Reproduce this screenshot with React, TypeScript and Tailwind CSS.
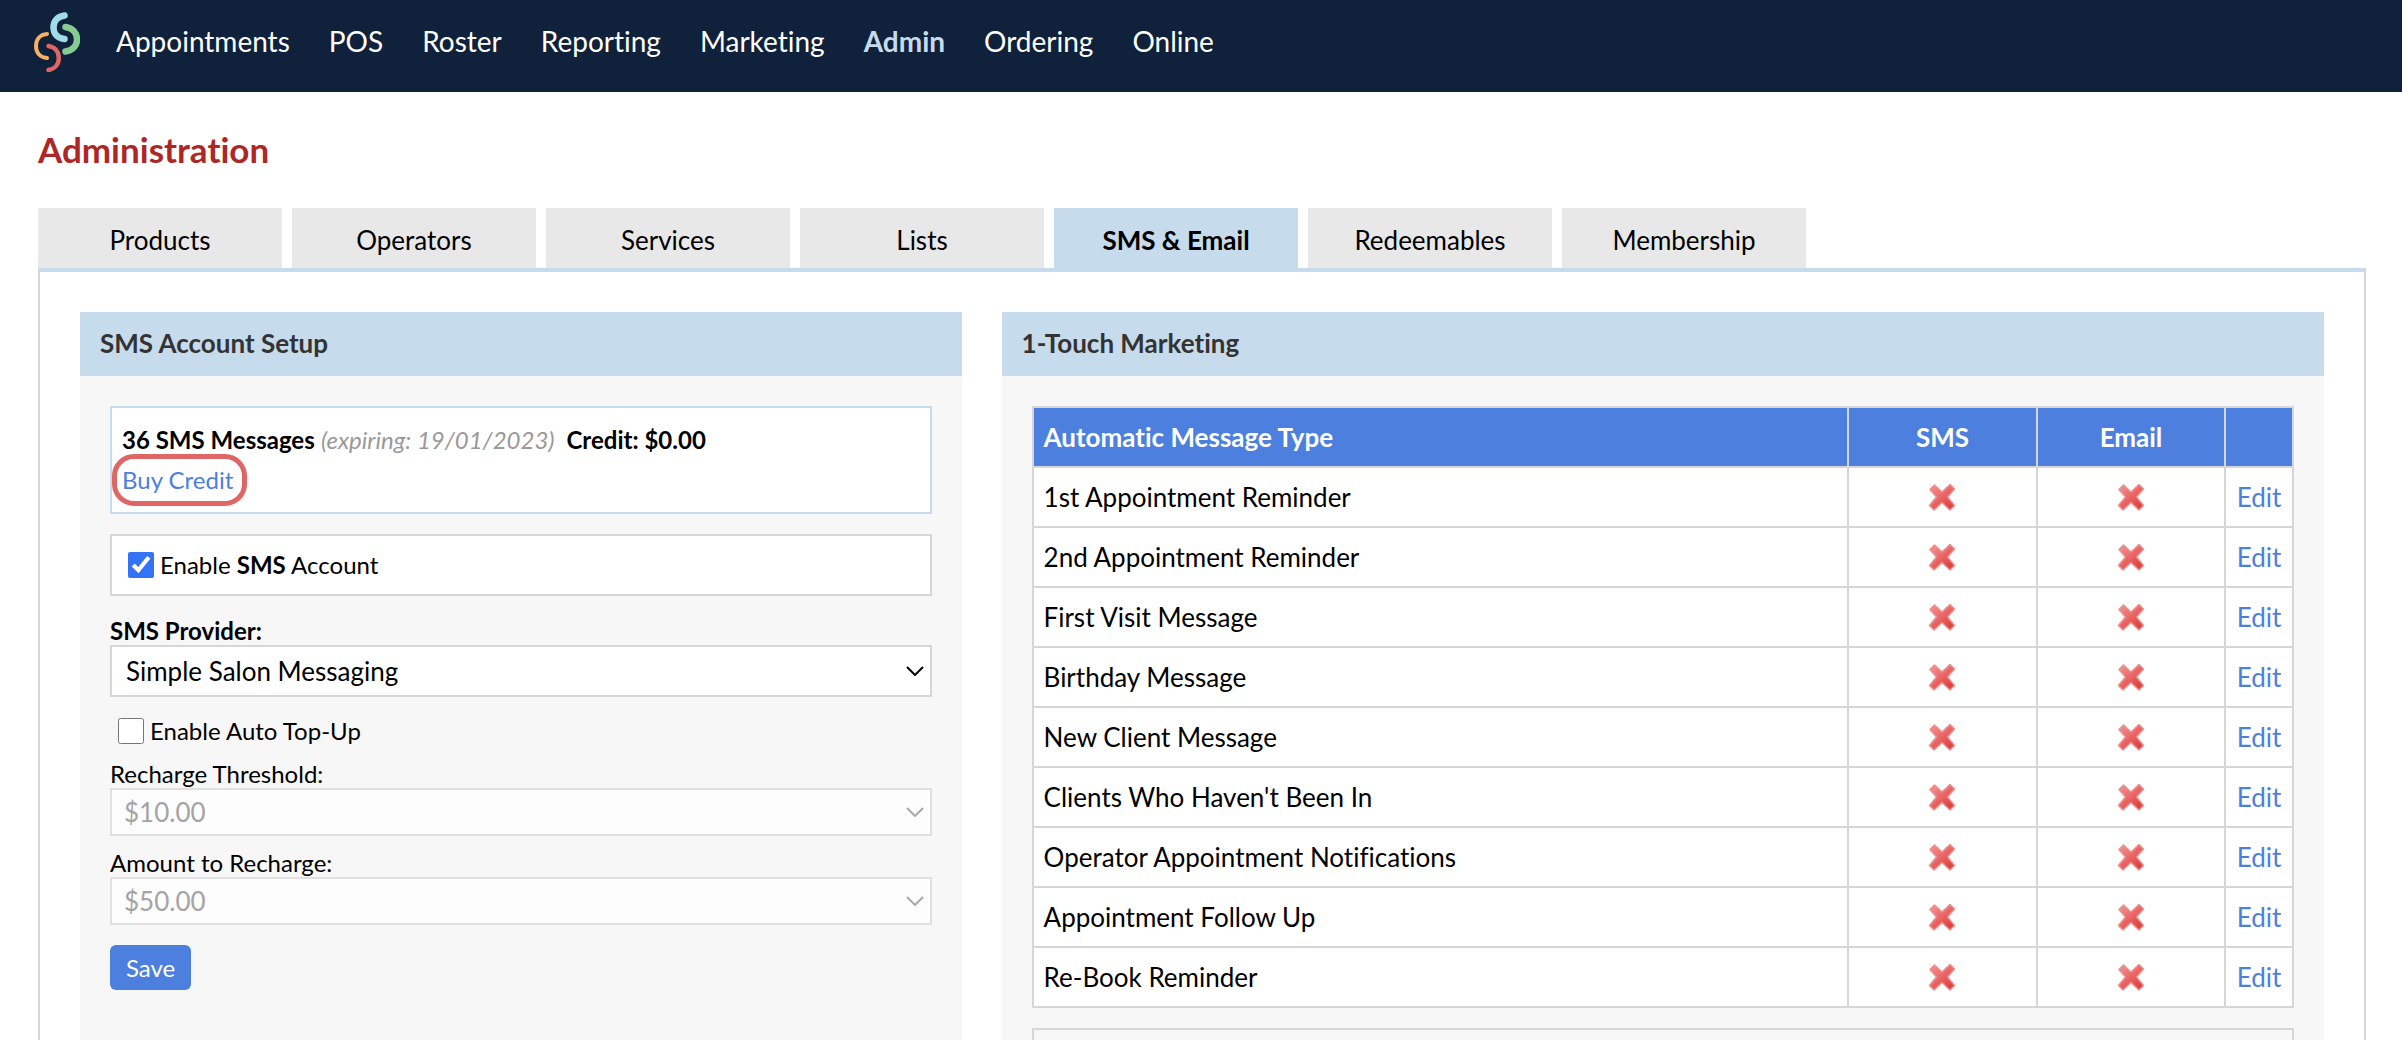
import React from 'react';

const navItems = [
  'Appointments',
  'POS',
  'Roster',
  'Reporting',
  'Marketing',
  'Admin',
  'Ordering',
  'Online',
];

const tabs = [
  'Products',
  'Operators',
  'Services',
  'Lists',
  'SMS & Email',
  'Redeemables',
  'Membership',
];

const messageTypes = [
  '1st Appointment Reminder',
  '2nd Appointment Reminder',
  'First Visit Message',
  'Birthday Message',
  'New Client Message',
  "Clients Who Haven't Been In",
  'Operator Appointment Notifications',
  'Appointment Follow Up',
  'Re-Book Reminder',
];

const Logo: React.FC = () => (
  <svg width="46" height="60" viewBox="0 0 46 60" fill="none" strokeLinecap="round">
    <path d="M30.5 3.5C23 4.5 19.5 9.5 19.5 15.5C19.5 22 24 26.5 30.5 27" stroke="#a0dbe8" strokeWidth="6.5" />
    <path d="M31.5 15C38.5 16 43 21 43 27.5C43 34 38.5 38.5 31.5 39.5" stroke="#86cb92" strokeWidth="6.5" />
    <path d="M13 22C6 22.5 2 27.5 2 34C2 40.5 6 45.5 13 46" stroke="#f6b263" strokeWidth="4" />
    <path d="M14.5 34C21 35 24.8 40 24.8 46C24.8 52 21 57 14.5 58" stroke="#e06666" strokeWidth="4.5" />
  </svg>
);

const CrossIcon: React.FC = () => (
  <svg width="28" height="28" viewBox="0 0 28 28" fill="none" className="mx-auto" role="img" aria-label="Off">
    <defs>
      <linearGradient id="cross" x1="4" y1="2" x2="24" y2="26" gradientUnits="userSpaceOnUse">
        <stop offset="0" stopColor="#f29393" />
        <stop offset="0.5" stopColor="#ea6464" />
        <stop offset="1" stopColor="#d93a34" />
      </linearGradient>
    </defs>
    <path
      d="M6.5 2L14 9L22 1.5L26.5 6L19.5 14L26.5 22.5L22 27L14 19.5L6 27L1.5 22.5L8.5 14L2 6.5Z"
      fill="url(#cross)"
      stroke="#ec8f8d"
      strokeWidth="1.5"
      strokeLinejoin="round"
    />
  </svg>
);

interface SelectFieldProps {
  id: string;
  value: string;
  className: string;
  disabled?: boolean;
}

const SelectField: React.FC<SelectFieldProps> = ({ id, value, className, disabled }) => (
  <div className="relative">
    <select
      id={id}
      disabled={disabled}
      className={`block w-full appearance-none border-2 text-[26px] opacity-100 ${
        disabled
          ? 'border-[#e0e0e0] bg-[#fdfdfd] text-[#a4a4a4]'
          : 'border-[#d6d6d6] bg-white text-black'
      } ${className}`}
    >
      <option>{value}</option>
    </select>
    <svg
      className="pointer-events-none absolute top-1/2 right-2 -translate-y-1/2"
      width="18"
      height="10"
      viewBox="0 0 18 10"
      fill="none"
      stroke={disabled ? '#a9a9a9' : '#000000'}
      strokeWidth="2"
    >
      <path d="M1 1L9 9L17 1" />
    </svg>
  </div>
);

const App: React.FC = () => {
  return (
    <div className="h-screen overflow-hidden bg-white font-['Lato',sans-serif] text-black [font-variant-ligatures:no-common-ligatures]">
      <header className="flex h-[92px] items-start bg-[#10213b] pt-3 pl-[34px]">
        <Logo />
        <nav className="ml-9 flex gap-[39px] pt-[11px] text-[28px] leading-9">
          {navItems.map((item) => (
            <a
              key={item}
              href="#"
              className={item === 'Admin' ? 'font-bold text-[#c6dbeb]' : 'text-white'}
            >
              {item}
            </a>
          ))}
        </nav>
      </header>

      <main className="pr-9 pl-[38px]">
        <h1 className="pt-[35px] text-[35px] leading-11 font-bold text-[#ae2727]">
          Administration
        </h1>

        <div className="mt-[37px] flex gap-[10px]" role="tablist">
          {tabs.map((tab) => (
            <button
              key={tab}
              type="button"
              role="tab"
              aria-selected={tab === 'SMS & Email'}
              className={`h-[60px] w-[244px] pt-1 text-[26px] ${
                tab === 'SMS & Email' ? 'bg-[#c6dbeb] font-bold' : 'bg-[#e8e8e8]'
              }`}
            >
              {tab}
            </button>
          ))}
        </div>

        <div className="grid grid-cols-[2fr_3fr] gap-10 border-x-2 border-t-4 border-x-[#d6d6d6] border-t-[#c6dbeb] p-10">
          <section className="bg-[#f7f7f7]">
            <h2 className="h-16 bg-[#c6dbeb] px-5 text-[26px] leading-[62px] font-bold text-[#333333]">
              SMS Account Setup
            </h2>
            <form className="p-[30px] text-[24px] leading-8">
              <div className="h-[108px] border-2 border-[#c6dbeb] bg-white px-[10px] pt-4">
                <p>
                  <b>36 SMS Messages</b>{' '}
                  <i className="text-[#999999]">(expiring: 19/01/2023)</i>
                  <b className="ml-3">Credit: $0.00</b>
                </p>
                <a
                  href="#"
                  className="relative mt-2 inline-block text-[#4c7fde]"
                >
                  Buy Credit
                  <span className="absolute -inset-y-[10px] -right-[14px] -left-[10px] rounded-[22px] border-5 border-[#e06666]" />
                </a>
              </div>

              <label className="mt-5 flex h-[62px] items-center border-2 border-[#d6d6d6] bg-white pl-4">
                <input type="checkbox" defaultChecked className="mr-[6px] size-[26px] accent-[#3472f7]" />
                <span>
                  Enable <b>SMS</b> Account
                </span>
              </label>

              <label htmlFor="provider" className="mt-[21px] block leading-7 font-bold">
                SMS Provider:
              </label>
              <SelectField id="provider" value="Simple Salon Messaging" className="h-[52px] pl-[14px]" />

              <label className="mt-[18px] flex items-center pl-2">
                <input type="checkbox" className="mr-[6px] size-[26px]" />
                Enable Auto Top-Up
              </label>

              <label htmlFor="threshold" className="mt-[13px] block leading-7">
                Recharge Threshold:
              </label>
              <SelectField id="threshold" value="$10.00" className="h-12 pl-3" disabled />

              <label htmlFor="amount" className="mt-[13px] block leading-7">
                Amount to Recharge:
              </label>
              <SelectField id="amount" value="$50.00" className="h-12 pl-3" disabled />

              <button type="submit" className="mt-5 h-[45px] rounded-md bg-[#4c7fde] px-4 text-white">
                Save
              </button>
            </form>
          </section>

          <section className="bg-[#f7f7f7]">
            <h2 className="h-16 bg-[#c6dbeb] px-5 text-[26px] leading-[62px] font-bold text-[#333333]">
              1-Touch Marketing
            </h2>
            <div className="p-[30px]">
              <table className="w-full table-fixed border-collapse bg-white text-[26px] leading-8">
                <colgroup>
                  <col />
                  <col className="w-[189px]" />
                  <col className="w-[188px]" />
                  <col className="w-[68px]" />
                </colgroup>
                <thead>
                  <tr className="h-[60px] bg-[#4c7fde] text-white">
                    <th className="border-2 border-[#d6d6d6] px-[10px] text-left">
                      Automatic Message Type
                    </th>
                    <th className="border-2 border-[#d6d6d6]">SMS</th>
                    <th className="border-2 border-[#d6d6d6]">Email</th>
                    <th className="border-2 border-[#d6d6d6]" aria-label="Actions" />
                  </tr>
                </thead>
                <tbody>
                  {messageTypes.map((type) => (
                    <tr key={type} className="h-[60px]">
                      <td className="border-2 border-[#d6d6d6] px-[10px]">{type}</td>
                      <td className="border-2 border-[#d6d6d6]">
                        <CrossIcon />
                      </td>
                      <td className="border-2 border-[#d6d6d6]">
                        <CrossIcon />
                      </td>
                      <td className="border-2 border-[#d6d6d6] text-center">
                        <a href="#" className="text-[#4c7fde]">
                          Edit
                        </a>
                      </td>
                    </tr>
                  ))}
                </tbody>
              </table>
              <div className="mt-5 h-[60px] border-2 border-[#d6d6d6]" />
            </div>
          </section>
        </div>
      </main>
    </div>
  );
};

export default App;
